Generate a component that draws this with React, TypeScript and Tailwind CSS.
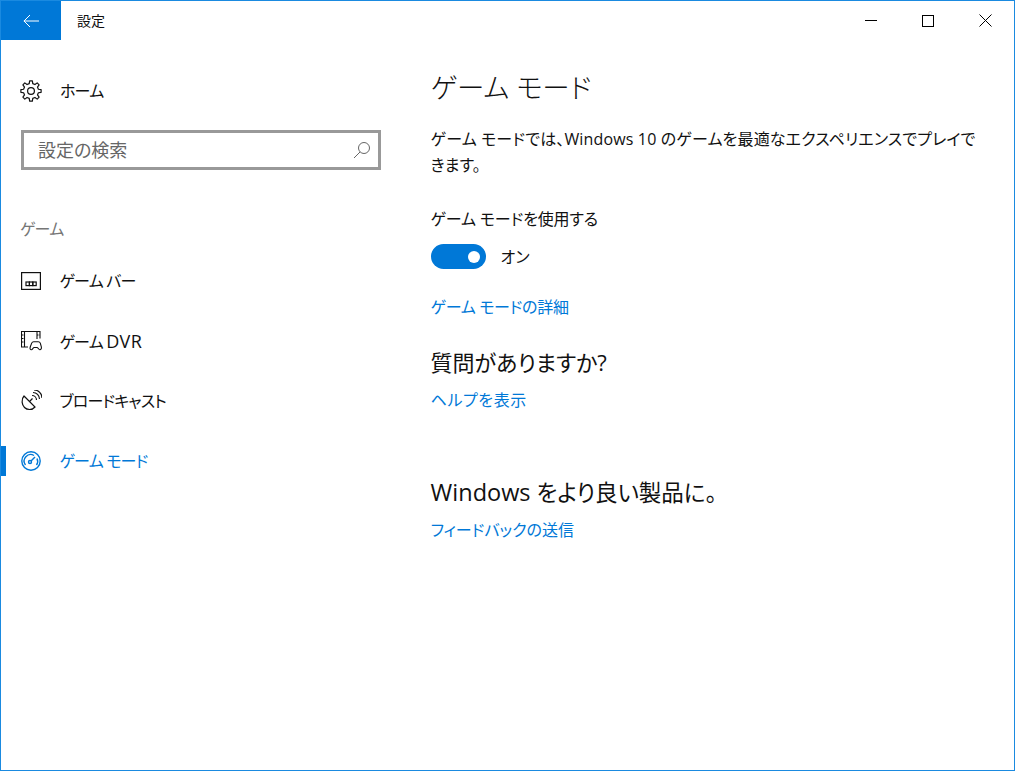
import React from "react";

const font = "[font-family:'Open_Sans','Noto_Sans_CJK_JP',sans-serif]";

function gearPath(cx: number, cy: number, outer: number, inner: number, teeth: number) {
  const pts: string[] = [];
  const step = (Math.PI * 2) / teeth;
  for (let i = 0; i < teeth; i++) {
    const a = i * step - Math.PI / 2;
    const p = (r: number, d: number) => `${(cx + r * Math.cos(a + d * step)).toFixed(2)} ${(cy + r * Math.sin(a + d * step)).toFixed(2)}`;
    pts.push(p(inner, -0.3), p(outer, -0.17), p(outer, 0.17), p(inner, 0.3));
  }
  return "M" + pts.join("L") + "Z";
}

function NavItem({ icon, label, active }: { icon: React.ReactNode; label: React.ReactNode; active?: boolean }) {
  const color = active ? "text-[#0078d7]" : "text-[#111111]";
  return (
    <div className="relative flex h-[60px] items-center pl-[19px]">
      {active && <div className="absolute left-[-1px] top-[15px] h-[30px] w-[6px] bg-[#0078d7]" />}
      <div className={`flex h-[22px] w-[22px] items-center justify-center ${color}`}>{icon}</div>
      <span className={`ml-[17.5px] text-[16px] leading-[20px] tracking-[-0.8px] ${color}`}>{label}</span>
    </div>
  );
}

export default function App() {
  return (
    <div className={`flex h-[771px] w-[1015px] flex-col overflow-hidden border border-[#1a8ae0] bg-white text-[#111111] ${font} [font-feature-settings:'palt']`}>
      <header className="flex h-[39px] shrink-0 items-center">
        <div className="flex h-[39px] w-[60px] items-center justify-center bg-[#0078d7] pr-[1px]">
          <svg width="16" height="14" viewBox="0 0 16 14" fill="none" stroke="white" strokeWidth="1"><path d="M0.8 7H16M7 1L1 7l6 6" /></svg>
        </div>
        <span className="ml-4 text-[14px]">設定</span>
        <div className="ml-auto flex h-full items-center">
          <div className="flex w-[57px] justify-center"><div className="h-px w-3 bg-black" /></div>
          <div className="flex w-[57px] justify-center"><div className="h-3 w-3 border border-black" /></div>
          <div className="flex w-[58px] justify-center">
            <svg width="13" height="13" viewBox="0 0 13 13" stroke="black" strokeWidth="1"><path d="M.5.5l12 12M12.5.5l-12 12" /></svg>
          </div>
        </div>
      </header>
      <div className="flex flex-1">
        <aside className="w-[429.6px] shrink-0">
          <div className="mt-[21px] flex h-[60px] items-center pl-[19px]">
            <svg width="22" height="22" viewBox="0 0 22 22" fill="none" stroke="#111" strokeWidth="1.2" strokeLinejoin="round">
              <path d={gearPath(11, 11, 10.2, 7.6, 8)} />
              <circle cx="11" cy="11" r="3.4" />
            </svg>
            <span className="ml-[18px] text-[16px] tracking-[-0.8px]">ホーム</span>
          </div>
          <div className="ml-5 mt-[9px] flex h-[40px] w-[360px] items-center border-[3px] border-[#999999] pl-[14px] pr-[7px] text-[18px] leading-[30px] text-[#666666]">
            <span className="-translate-y-[0.5px]">設定の検索</span>
            <svg className="ml-auto" width="18" height="18" viewBox="0 0 18 18" fill="none" stroke="#666" strokeWidth="1"><circle cx="11" cy="7" r="5.5" /><path d="M7 11l-6 6" /></svg>
          </div>
          <div className="ml-[19px] mt-[48px] h-[33px] text-[16px] leading-[22px] tracking-[-0.8px] text-[#767676]">ゲーム</div>
          <NavItem label="ゲーム バー" icon={<svg width="20" height="18" viewBox="0 0 20 18" fill="none" stroke="currentColor" strokeWidth="1.2"><rect x=".6" y=".6" width="18.8" height="16.8" /><rect x="5" y="10" width="3.4" height="3.6" /><rect x="8.4" y="10" width="3.4" height="3.6" /><rect x="11.8" y="10" width="3.4" height="3.6" /></svg>} />
          <NavItem label={<>ゲーム <span className="text-[18px] tracking-[0.3px]">DVR</span></>} icon={<svg width="21" height="20" viewBox="0 0 21 20" fill="none" stroke="currentColor" strokeWidth="1.1"><path d="M7 16H.5V.5h18.5v7" /><path d="M3.5 1v15M16 1v7" /><path d="M1 4h2.5M1 7.5h2.5M1 11h2.5M16 4h3" strokeDasharray="1.5 1" /><path d="M10.5 18.8c-1.5 0-1.8-1.5-1-3.5l1.2-3.2c.4-1 1-1.3 2-1.3h4.6c1 0 1.6.3 2 1.3l.9 3.2c.6 2-.2 3.5-1.3 3.500-1 0-1.800-2.300-3-2.300h-2.800c-1 0-1.600 2.300-2.600 2.300z" /></svg>} />
          <NavItem label="ブロードキャスト" icon={<svg width="22" height="22" viewBox="0 0 22 22" fill="none" stroke="currentColor" strokeWidth="1.2"><path d="M4 6l11 11c-3 3.500-8 3-10.500.5S.8 9.500 4 6z" /><path d="M9.500 11.500l3-3" /><path d="M12 5.500c2.500 0 4.500 2 4.500 4.500M13 2.500c3.500 0 6.500 3 6.500 6.500M14 0c4.500 0 8 3.500 8 8" /></svg>} />
          <NavItem active label="ゲーム モード" icon={<svg width="20" height="20" viewBox="0 0 20 20" fill="none" stroke="currentColor" strokeWidth="1.4"><circle cx="10" cy="10" r="9.200" /><path d="M4.500 14a6.500 6.500 0 0 1 8.500-9.500M16 7.500a6.500 6.500 0 0 1-.5 6.500" /><circle cx="9" cy="11" r="1.500" /><path d="M10 10l4-4" /></svg>} />
        </aside>
        <main className="flex-1 pr-6">
          <h1 className="mt-[25px] text-[27.5px] leading-[46px] font-light">ゲーム モード</h1>
          <p className="mt-[15px] w-[551px] text-[16px] leading-[26px] tracking-[0.15px]">ゲーム モードでは、Windows 10 のゲームを最適なエクスペリエンスでプレイできます。</p>
          <div className="mt-[29px] text-[16px] leading-[24px] tracking-[-0.15px]">ゲーム モードを使用する</div>
          <div className="mt-[13px] flex items-center">
            <div className="flex h-[25px] w-[55px] items-center justify-end rounded-full bg-[#0078d7] pr-[6px]"><div className="h-3 w-3 rounded-full bg-white" /></div>
            <span className="ml-[15px] text-[16px] leading-[24px]">オン</span>
          </div>
          <div className="mt-[26px] text-[16px] leading-[24px] tracking-[-0.3px] text-[#0078d7]">ゲーム モードの詳細</div>
          <h2 className="mt-[27px] text-[22px] leading-[32px]">質問がありますか?</h2>
          <div className="mt-[10px] text-[16px] leading-[24px] tracking-[0.6px] text-[#0078d7]">ヘルプを表示</div>
          <h2 className="mt-[64px] text-[22.5px] leading-[32px]"><span className="text-[23.5px]">Windows</span> をより良い製品に。</h2>
          <div className="mt-[9px] text-[16px] leading-[24px] text-[#0078d7]">フィードバックの送信</div>
        </main>
      </div>
    </div>
  );
}
